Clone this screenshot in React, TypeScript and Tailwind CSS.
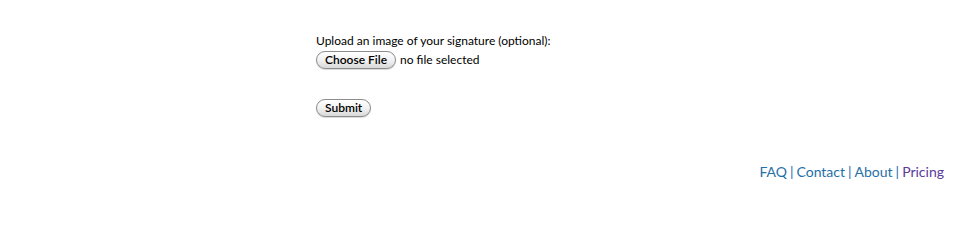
const MAC_BUTTON =
  'inline-flex h-[18px] items-center rounded-full border border-[#8c8c8c] bg-gradient-to-b from-white via-[#f2f2f2] to-[#d9d9d9] px-[8px] text-[12px] font-semibold leading-none text-black shadow-[0_1px_1px_rgba(0,0,0,0.15)]'

export default function App() {
  return (
    <div className="min-h-[200px] w-[962px] bg-white font-['Lato',sans-serif] text-black">
      <form className="pl-[316px] pt-[33px]" onSubmit={(e) => e.preventDefault()}>
        <label className="block text-[12px] leading-[15px]">
          Upload an image of your signature (optional):
        </label>
        <div className="mt-[3px] flex items-center gap-[4px]">
          <button type="button" className={MAC_BUTTON}>
            Choose File
          </button>
          <span className="text-[12px]">no file selected</span>
        </div>
        <div className="mt-[25px]">
          <button type="submit" className={MAC_BUTTON}>
            Submit
          </button>
        </div>
      </form>
      <footer className="mt-[43px] flex justify-end pr-[18px] text-[14px] text-[#1f6fa8]">
        <a href="#faq">FAQ</a>
        <span className="px-[3px]">|</span>
        <a href="#contact">Contact</a>
        <span className="px-[3px]">|</span>
        <a href="#about">About</a>
        <span className="px-[3px]">|</span>
        <a href="#pricing" className="text-[#5b3a9a]">
          Pricing
        </a>
      </footer>
    </div>
  )
}
